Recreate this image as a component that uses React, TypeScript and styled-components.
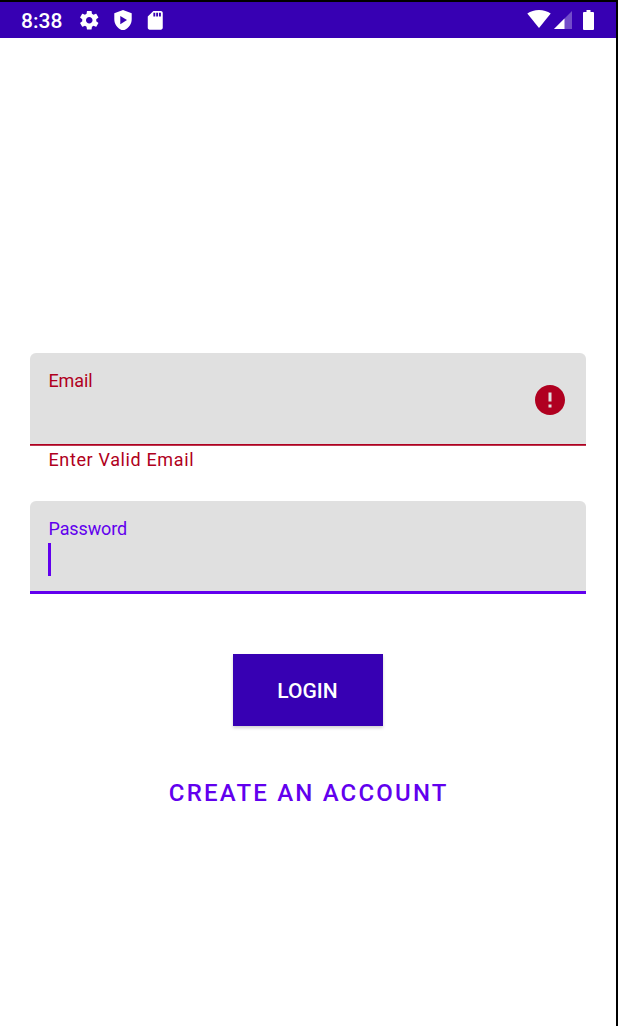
import React from "react";
import styled, { createGlobalStyle } from "styled-components";

const GlobalStyle = createGlobalStyle`
  *, *::before, *::after { box-sizing: border-box; }
  html, body { margin: 0; padding: 0; background: #000; }
  button, input { font-family: inherit; }
`;

const Screen = styled.main`
  display: flex;
  flex-direction: column;
  width: 618px;
  height: 1026px;
  border-top: 2px solid #000;
  border-right: 2px solid #000;
  background: #fff;
  font-family: Roboto, "Liberation Sans", sans-serif;
  overflow: hidden;
`;

const StatusBar = styled.header`
  display: flex;
  justify-content: space-between;
  align-items: flex-start;
  height: 36px;
  flex: none;
  padding: 0 22px 0 21px;
  background: #3700b3;
  color: #fff;
`;

const StatusGroup = styled.div`
  display: flex;
  align-items: flex-start;
`;

const Clock = styled.span`
  width: 42px;
  margin-right: 15px;
  font-size: 21px;
  font-weight: 500;
  line-height: 38px;
  white-space: nowrap;
`;

const StatusIcon = styled.svg<{ $top: number; $gap?: number }>`
  display: block;
  flex: none;
  margin-top: ${(p) => p.$top}px;
  margin-right: ${(p) => p.$gap ?? 0}px;
  fill: currentColor;
`;

const Form = styled.form`
  display: flex;
  flex-direction: column;
  align-items: center;
  padding: 315px 30px 0;
`;

const Field = styled.label<{ $color: string; $line: number }>`
  display: flex;
  justify-content: space-between;
  width: 100%;
  height: 93px;
  padding: 17px 21px 0 18.5px;
  border-radius: 6px 6px 0 0;
  background: linear-gradient(${(p) => p.$color}, ${(p) => p.$color}) bottom / 100%
    ${(p) => p.$line}px no-repeat #e0e0e0;
  color: ${(p) => p.$color};
`;

const FieldText = styled.span`
  display: flex;
  flex-direction: column;
  align-items: flex-start;
`;

const FieldLabel = styled.span`
  font-size: 18px;
  line-height: 22px;
  letter-spacing: -0.12px;
`;

const Caret = styled.span`
  width: 3px;
  height: 33px;
  margin: 3px 0 0 -0.5px;
  background: #6200ee;
`;

const ErrorIcon = styled.svg`
  width: 36px;
  height: 36px;
  margin: 11.5px -3px 0 0;
  fill: #b00020;
`;

const HelperText = styled.p`
  align-self: flex-start;
  height: 55px;
  margin: 0;
  padding: 3px 0 0 18.5px;
  color: #b00020;
  font-size: 18px;
  line-height: 22px;
  letter-spacing: 0.63px;
`;

const LoginButton = styled.button`
  width: 150px;
  height: 72px;
  margin-top: 60px;
  padding: 1px 1px 0 0;
  border: 0;
  background: #3700b3;
  box-shadow: 0 2px 3px rgba(0, 0, 0, 0.18);
  color: #fff;
  font-size: 21px;
  font-weight: 500;
  line-height: 24px;
`;

const TextButton = styled.button`
  margin-top: 52px;
  padding: 0 0 0 1.5px;
  border: 0;
  background: none;
  color: #6200ee;
  font-size: 24px;
  font-weight: 500;
  line-height: 30px;
  letter-spacing: 2.2px;
  white-space: nowrap;
`;

export default function App() {
  return (
    <>
      <GlobalStyle />
      <Screen>
        <StatusBar>
          <StatusGroup>
            <Clock>8:38</Clock>
            <StatusIcon $top={6.75} $gap={13} width="22.5" height="22.5" viewBox="0 0 24 24">
              <path d="M19.43 12.98c.04-.32.07-.64.07-.98s-.03-.66-.07-.98l2.11-1.65c.19-.15.24-.42.12-.64l-2-3.46c-.12-.22-.39-.3-.61-.22l-2.49 1c-.52-.4-1.08-.73-1.69-.98l-.38-2.65C14.46 2.18 14.25 2 14 2h-4c-.25 0-.46.18-.49.42l-.38 2.65c-.61.25-1.17.59-1.69.98l-2.49-1c-.23-.09-.49 0-.61.22l-2 3.46c-.13.22-.07.49.12.64l2.11 1.65c-.04.32-.07.65-.07.98s.03.66.07.98l-2.11 1.65c-.19.15-.24.42-.12.64l2 3.46c.12.22.39.3.61.22l2.49-1c.52.4 1.08.73 1.69.98l.38 2.65c.03.24.24.42.49.42h4c.25 0 .46-.18.49-.42l.38-2.65c.61-.25 1.17-.59 1.69-.98l2.49 1c.23.09.49 0 .61-.22l2-3.46c.12-.22.07-.49-.12-.64l-2.11-1.65zM12 15.5c-1.93 0-3.5-1.57-3.5-3.5s1.57-3.5 3.5-3.5 3.5 1.57 3.5 3.5-1.57 3.5-3.5 3.5z" />
            </StatusIcon>
            <StatusIcon $top={7.75} $gap={12.25} width="18" height="20.5" viewBox="0 0 18 20.5">
              <path
                fillRule="evenodd"
                d="M9 0 17.7 3.3V9.3C17.7 14.5 14 19 9 20.5 4 19 .3 14.5.3 9.3V3.3ZM6.3 6V14.2L13 10.1Z"
              />
            </StatusIcon>
            <StatusIcon $top={6.75} width="22.5" height="22.5" viewBox="0 0 24 24">
              <path d="M18 2h-8L4.02 8 4 20c0 1.1.9 2 2 2h12c1.1 0 2-.9 2-2V4c0-1.1-.9-2-2-2zm-6 6h-2V4h2v4zm3 0h-2V4h2v4zm3 0h-2V4h2v4z" />
            </StatusIcon>
          </StatusGroup>
          <StatusGroup>
            <StatusIcon $top={8} $gap={3.5} width="24" height="18" viewBox="0 0 24 18">
              <path d="M12 18 .3 3.6C3.6 1.3 7.6 0 12 0s8.400 1.300 11.700 3.600Z" />
            </StatusIcon>
            <StatusIcon $top={9} $gap={11} width="18" height="18" viewBox="0 0 18 18">
              <path opacity=".3" d="M0 18H18V0Z" />
              <path d="M0 18H10.500V7.500Z" />
            </StatusIcon>
            <StatusIcon $top={8} width="11" height="20" viewBox="0 0 11 20">
              <path d="M3.500 0h4v2H10q1 0 1 1V19q0 1-1 1H1q-1 0-1-1V3q0-1 1-1h2.500Z" />
            </StatusIcon>
          </StatusGroup>
        </StatusBar>

        <Form onSubmit={(e) => e.preventDefault()}>
          <Field $color="#b00020" $line={1.75}>
            <FieldText>
              <FieldLabel>Email</FieldLabel>
            </FieldText>
            <ErrorIcon viewBox="0 0 24 24">
              <path d="M12 2C6.480 2 2 6.480 2 12s4.480 10 10 10 10-4.480 10-10S17.520 2 12 2zm1 15h-2v-2h2v2zm0-4h-2V7h2v6z" />
            </ErrorIcon>
          </Field>
          <HelperText>Enter Valid Email</HelperText>
          <Field $color="#6200ee" $line={3}>
            <FieldText>
              <FieldLabel>Password</FieldLabel>
              <Caret />
            </FieldText>
          </Field>
          <LoginButton type="submit">LOGIN</LoginButton>
          <TextButton type="button">CREATE AN ACCOUNT</TextButton>
        </Form>
      </Screen>
    </>
  );
}
